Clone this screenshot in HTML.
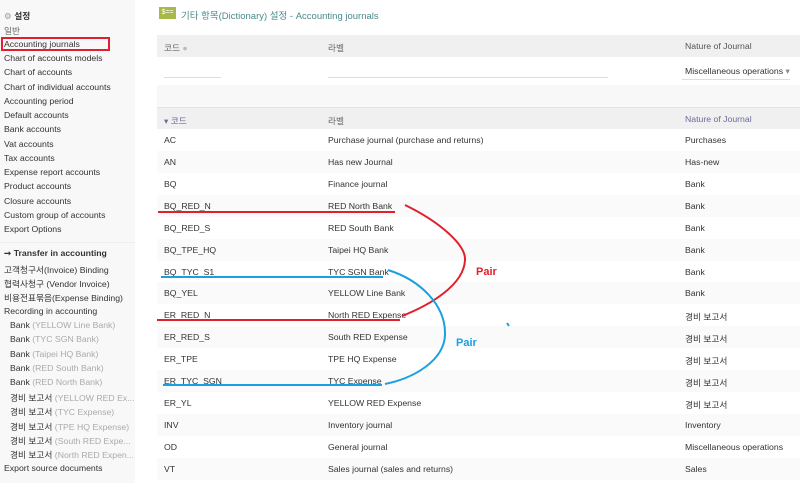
<!DOCTYPE html>
<html><head><meta charset="utf-8"><style>
*{margin:0;padding:0;box-sizing:border-box}
body{width:800px;height:483px;overflow:hidden;background:#fff;font-family:"Liberation Sans","Noto Sans CJK KR",sans-serif;font-size:8.7px;color:#333;position:relative}
#side{position:absolute;left:0;top:0;width:135px;height:483px;background:#f8f8f8}
.si{position:absolute;left:4px;white-space:nowrap;color:#333}
.si.sub{left:10px}
.g{color:#aaa}
.b{font-weight:bold}
#main{position:absolute;left:157px;top:0;width:643px}
.row{position:absolute;left:0;width:643px;height:22px}
.c{position:absolute;top:6px;white-space:nowrap}
.c1{left:7px}.c2{left:171px}.c3{left:528px}
.alt{background:#fafafa}
</style></head><body>
<div id="side">
<div class="si b" style="top:9px"><span style="color:#999;font-weight:normal">⚙</span> 설정</div>
<div class="si" style="top:24px;color:#666">일반</div>
<div style="position:absolute;left:1px;top:37px;width:109px;height:14px;border:2px solid #e02030"></div>
<div class="si" style="top:39px">Accounting journals</div>
<div class="si" style="top:53px">Chart of accounts models</div>
<div class="si" style="top:67px">Chart of accounts</div>
<div class="si" style="top:82px">Chart of individual accounts</div>
<div class="si" style="top:96px">Accounting period</div>
<div class="si" style="top:110px">Default accounts</div>
<div class="si" style="top:124px">Bank accounts</div>
<div class="si" style="top:139px">Vat accounts</div>
<div class="si" style="top:153px">Tax accounts</div>
<div class="si" style="top:167px">Expense report accounts</div>
<div class="si" style="top:181px">Product accounts</div>
<div class="si" style="top:196px">Closure accounts</div>
<div class="si" style="top:210px">Custom group of accounts</div>
<div class="si" style="top:224px">Export Options</div>
<div style="position:absolute;left:0;top:242px;width:135px;border-top:1px solid #eee"></div>
<div class="si b" style="top:248px">➞ Transfer in accounting</div>
<div class="si" style="top:263px">고객청구서(Invoice) Binding</div>
<div class="si" style="top:277px">협력사청구 (Vendor Invoice)</div>
<div class="si" style="top:291px">비용전표묶음(Expense Binding)</div>
<div class="si" style="top:306px">Recording in accounting</div>
<div class="si sub" style="top:320px">Bank <span class="g">(YELLOW Line Bank)</span></div>
<div class="si sub" style="top:334px">Bank <span class="g">(TYC SGN Bank)</span></div>
<div class="si sub" style="top:349px">Bank <span class="g">(Taipei HQ Bank)</span></div>
<div class="si sub" style="top:363px">Bank <span class="g">(RED South Bank)</span></div>
<div class="si sub" style="top:377px">Bank <span class="g">(RED North Bank)</span></div>
<div class="si sub" style="top:391px">경비 보고서 <span class="g">(YELLOW RED Ex...</span></div>
<div class="si sub" style="top:405px">경비 보고서 <span class="g">(TYC Expense)</span></div>
<div class="si sub" style="top:420px">경비 보고서 <span class="g">(TPE HQ Expense)</span></div>
<div class="si sub" style="top:434px">경비 보고서 <span class="g">(South RED Expe...</span></div>
<div class="si sub" style="top:448px">경비 보고서 <span class="g">(North RED Expen...</span></div>
<div class="si" style="top:463px">Export source documents</div>
</div>
<div id="main">
<div style="position:absolute;left:2px;top:7px;width:17px;height:12px;background:#a8b84a;color:#fff;font-size:7px;text-align:center;line-height:12px">$==</div>
<div style="position:absolute;left:24px;top:8px;font-size:9.5px;color:#4a8a8a;white-space:nowrap">기타 항목(Dictionary) 설정 - Accounting journals</div>
<div class="row" style="top:35px;background:#f0f0f0"><span class="c c1" style="color:#666">코드 <span style="color:#bbb">●</span></span><span class="c c2" style="color:#666">라벨</span><span class="c c3" style="color:#555">Nature of Journal</span></div>
<div class="row" style="top:57px;height:28px">
<div style="position:absolute;left:7px;top:20px;width:57px;border-top:1px solid #ddd"></div>
<div style="position:absolute;left:171px;top:20px;width:280px;border-top:1px solid #ddd"></div>
<span class="c c3" style="top:9px;color:#333">Miscellaneous operations <span style="color:#888">▾</span></span>
<div style="position:absolute;left:525px;top:22px;width:108px;border-top:1px solid #ddd"></div></div>
<div class="row" style="top:85px;background:#f8f8f8"></div>
<div class="row" style="top:107px;background:#f0f0f0;border-top:1px solid #e4e4e4"><span class="c c1" style="color:#6a6a9a">▾ 코드</span><span class="c c2" style="color:#666">라벨</span><span class="c c3" style="color:#6a6a9a">Nature of Journal</span></div>
<div class="row" style="top:129px"><span class="c c1">AC</span><span class="c c2">Purchase journal (purchase and returns)</span><span class="c c3">Purchases</span></div>
<div class="row alt" style="top:151px"><span class="c c1">AN</span><span class="c c2">Has new Journal</span><span class="c c3">Has-new</span></div>
<div class="row" style="top:173px"><span class="c c1">BQ</span><span class="c c2">Finance journal</span><span class="c c3">Bank</span></div>
<div class="row alt" style="top:195px"><span class="c c1">BQ_RED_N</span><span class="c c2">RED North Bank</span><span class="c c3">Bank</span></div>
<div class="row" style="top:217px"><span class="c c1">BQ_RED_S</span><span class="c c2">RED South Bank</span><span class="c c3">Bank</span></div>
<div class="row alt" style="top:239px"><span class="c c1">BQ_TPE_HQ</span><span class="c c2">Taipei HQ Bank</span><span class="c c3">Bank</span></div>
<div class="row" style="top:261px"><span class="c c1">BQ_TYC_S1</span><span class="c c2">TYC SGN Bank</span><span class="c c3">Bank</span></div>
<div class="row alt" style="top:282px"><span class="c c1">BQ_YEL</span><span class="c c2">YELLOW Line Bank</span><span class="c c3">Bank</span></div>
<div class="row" style="top:304px"><span class="c c1">ER_RED_N</span><span class="c c2">North RED Expense</span><span class="c c3">경비 보고서</span></div>
<div class="row alt" style="top:326px"><span class="c c1">ER_RED_S</span><span class="c c2">South RED Expense</span><span class="c c3">경비 보고서</span></div>
<div class="row" style="top:348px"><span class="c c1">ER_TPE</span><span class="c c2">TPE HQ Expense</span><span class="c c3">경비 보고서</span></div>
<div class="row alt" style="top:370px"><span class="c c1">ER_TYC_SGN</span><span class="c c2">TYC Expense</span><span class="c c3">경비 보고서</span></div>
<div class="row" style="top:392px"><span class="c c1">ER_YL</span><span class="c c2">YELLOW RED Expense</span><span class="c c3">경비 보고서</span></div>
<div class="row alt" style="top:414px"><span class="c c1">INV</span><span class="c c2">Inventory journal</span><span class="c c3">Inventory</span></div>
<div class="row" style="top:436px"><span class="c c1">OD</span><span class="c c2">General journal</span><span class="c c3">Miscellaneous operations</span></div>
<div class="row alt" style="top:458px"><span class="c c1">VT</span><span class="c c2">Sales journal (sales and returns)</span><span class="c c3">Sales</span></div>
</div>
<svg style="position:absolute;left:0;top:0" width="800" height="483">
<g fill="none" stroke-width="2">
<path d="M158 212H395" stroke="#e0202c"/>
<path d="M157 320H400" stroke="#e0202c"/>
<path d="M405 205C440 222 466 245 465 260C464 285 430 305 402 316" stroke="#e0202c"/>
<path d="M161 277H383" stroke="#18a0e0"/>
<path d="M163 385H382" stroke="#18a0e0"/>
<path d="M388 270C420 280 446 305 445 335C444 360 415 378 385 384" stroke="#18a0e0"/>
<path d="M507 323L509 326" stroke="#18a0e0"/>
</g>
<text x="476" y="275" fill="#e0202c" font-family="Liberation Sans" font-weight="bold" font-size="11">Pair</text>
<text x="456" y="346" fill="#18a0e0" font-family="Liberation Sans" font-weight="bold" font-size="11">Pair</text>
</svg>
</body></html>
